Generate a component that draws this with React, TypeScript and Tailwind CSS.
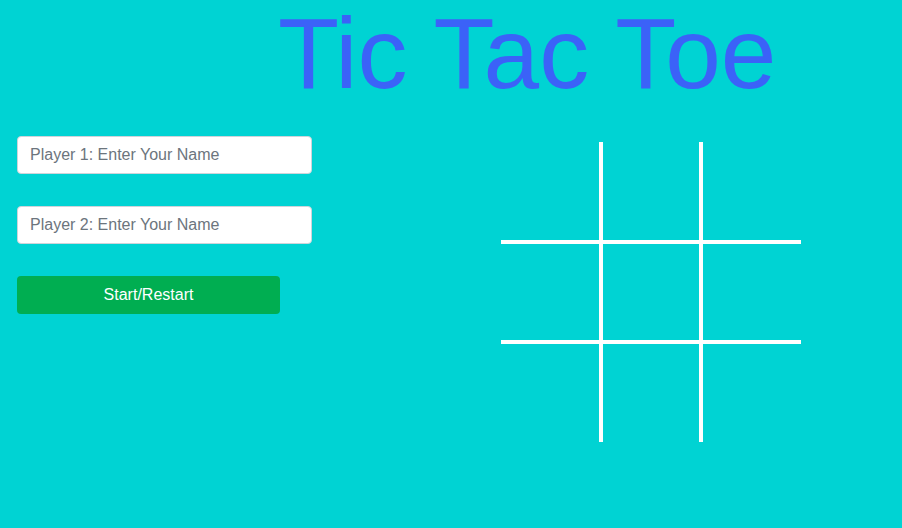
import React from "react";

export default function App() {
  const cells = Array.from({ length: 9 }, (_, i) => i);
  const cellClass = (i: number) => {
    const r = Math.floor(i / 3);
    const c = i % 3;
    const cls: string[] = ["w-[100px]", "h-[100px]", "border-white", "border-solid"];
    cls.push(c === 0 ? "border-l-0" : "border-l-2");
    cls.push(c === 2 ? "border-r-0" : "border-r-2");
    cls.push(r === 0 ? "border-t-0" : "border-t-2");
    cls.push(r === 2 ? "border-b-0" : "border-b-2");
    return cls.join(" ");
  };
  return (
    <div
      className="w-[902px] h-[528px] bg-[#00d3d3] overflow-hidden"
      style={{ fontFamily: '"Liberation Sans", Arial, sans-serif' }}
    >
      <h1 className="text-[100px] leading-[100px] text-[#3b62f8] pl-[278px] pt-[3px] m-0 font-normal">
        Tic Tac Toe
      </h1>
      <div className="flex items-start mt-[33px]">
        <div className="ml-[17px] w-[295px] flex flex-col">
          <input
            className="h-[38px] w-[295px] bg-white border border-[#ced4da] rounded-[4px] px-[12px] text-[16px] text-[#495057] placeholder:text-[#6c757d] outline-none"
            placeholder="Player 1: Enter Your Name"
          />
          <input
            className="mt-[32px] h-[38px] w-[295px] bg-white border border-[#ced4da] rounded-[4px] px-[12px] text-[16px] text-[#495057] placeholder:text-[#6c757d] outline-none"
            placeholder="Player 2: Enter Your Name"
          />
          <button className="mt-[32px] h-[38px] w-[263px] bg-[#00ae51] rounded-[4px] text-white text-[16px] flex items-center justify-center">
            Start/Restart
          </button>
        </div>
        <div className="ml-[189px] mt-[6px] grid grid-cols-3 w-[300px] h-[300px]">
          {cells.map((i) => (
            <div key={i} className={cellClass(i)} />
          ))}
        </div>
      </div>
    </div>
  );
}
